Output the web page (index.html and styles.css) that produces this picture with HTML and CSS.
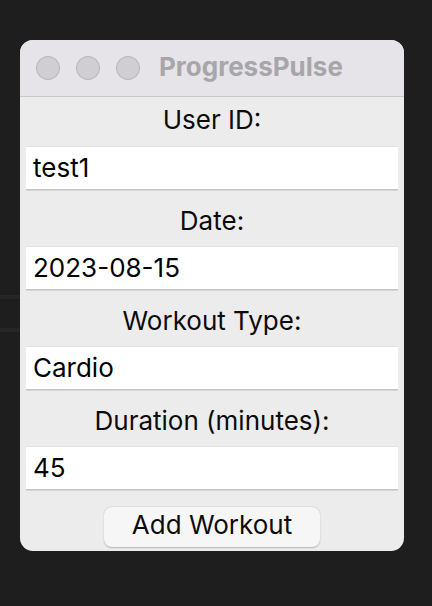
FILE: index.html
```html
<!DOCTYPE html>
<html>
<head>
<meta charset="utf-8">
<link rel="stylesheet" href="styles.css">
</head>
<body>
<div class="window">
  <div class="titlebar">
    <div class="lights">
      <span class="light"></span>
      <span class="light"></span>
      <span class="light"></span>
    </div>
    <div class="title">ProgressPulse</div>
  </div>
  <div class="content">
    <div class="label first">User ID:</div>
    <div class="field">test1</div>
    <div class="label">Date:</div>
    <div class="field">2023-08-15</div>
    <div class="label">Workout Type:</div>
    <div class="field">Cardio</div>
    <div class="label">Duration (minutes):</div>
    <div class="field">45</div>
    <div class="actions">
      <button class="btn">Add Workout</button>
    </div>
  </div>
</div>
</body>
</html>
```
FILE: styles.css
```css
html, body {
  margin: 0;
  padding: 0;
}
body {
  width: 432px;
  height: 606px;
  background-color: #1e1e1e;
  background-image:
    linear-gradient(#1e1e1e, #1e1e1e),
    linear-gradient(to bottom,
      #1e1e1e 0, #1e1e1e 295px,
      #262626 295px, #262626 299px,
      #1e1e1e 299px, #1e1e1e 328px,
      #262626 328px, #262626 332px,
      #1e1e1e 332px);
  background-size: 100% 100%, 20px 100%;
  background-repeat: no-repeat;
  background-position: 20px 0, 0 0;
  font-family: Inter, "Liberation Sans", sans-serif;
  overflow: hidden;
  padding-top: 40px;
  padding-left: 20px;
  box-sizing: border-box;
}
.window {
  width: 384px;
  height: 511px;
  border-radius: 13px;
  background: #ececec;
  overflow: hidden;
  display: flex;
  flex-direction: column;
}
.titlebar {
  height: 56px;
  background: #e6e4e9;
  border-bottom: 1px solid #c9c8cb;
  display: flex;
  align-items: center;
  padding-left: 16px;
  flex-shrink: 0;
}
.lights {
  display: flex;
  gap: 16px;
}
.light {
  width: 22px;
  height: 22px;
  border-radius: 50%;
  background: #d0ced3;
  border: 1px solid #b4b2b7;
}
.title {
  margin-left: 19px;
  margin-bottom: 4px;
  font-weight: 700;
  font-size: 26px;
  color: #a7a6a9;
}
.content {
  padding: 0 6px;
  display: flex;
  flex-direction: column;
}
.label {
  text-align: center;
  font-size: 26px;
  line-height: 48px;
  height: 48px;
  padding-top: 7px;
  margin-bottom: 1px;
  color: #0c0c0c;
}
.label.first {
  padding-top: 0;
  line-height: 45px;
  height: 45px;
  margin-bottom: 4px;
}
.field {
  height: 44px;
  box-sizing: border-box;
  background: #ffffff;
  border-top: 1px solid #e2e2e2;
  border-bottom: 1px solid #c3c3c3;
  box-shadow: 0 1px 0 #d8d8d8;
  padding-left: 7px;
  font-size: 26px;
  line-height: 42px;
  color: #000;
}
.actions {
  display: flex;
  justify-content: center;
  padding-top: 17px;
}
.btn {
  width: 216px;
  height: 40px;
  border: none;
  border-radius: 8px;
  background: #f6f6f6;
  box-shadow: 0 0.5px 1.5px rgba(0,0,0,0.25);
  font-family: Inter, "Liberation Sans", sans-serif;
  font-size: 26px;
  line-height: 32px;
  color: #0c0c0c;
  padding: 0 0 4px 0;
}
```
